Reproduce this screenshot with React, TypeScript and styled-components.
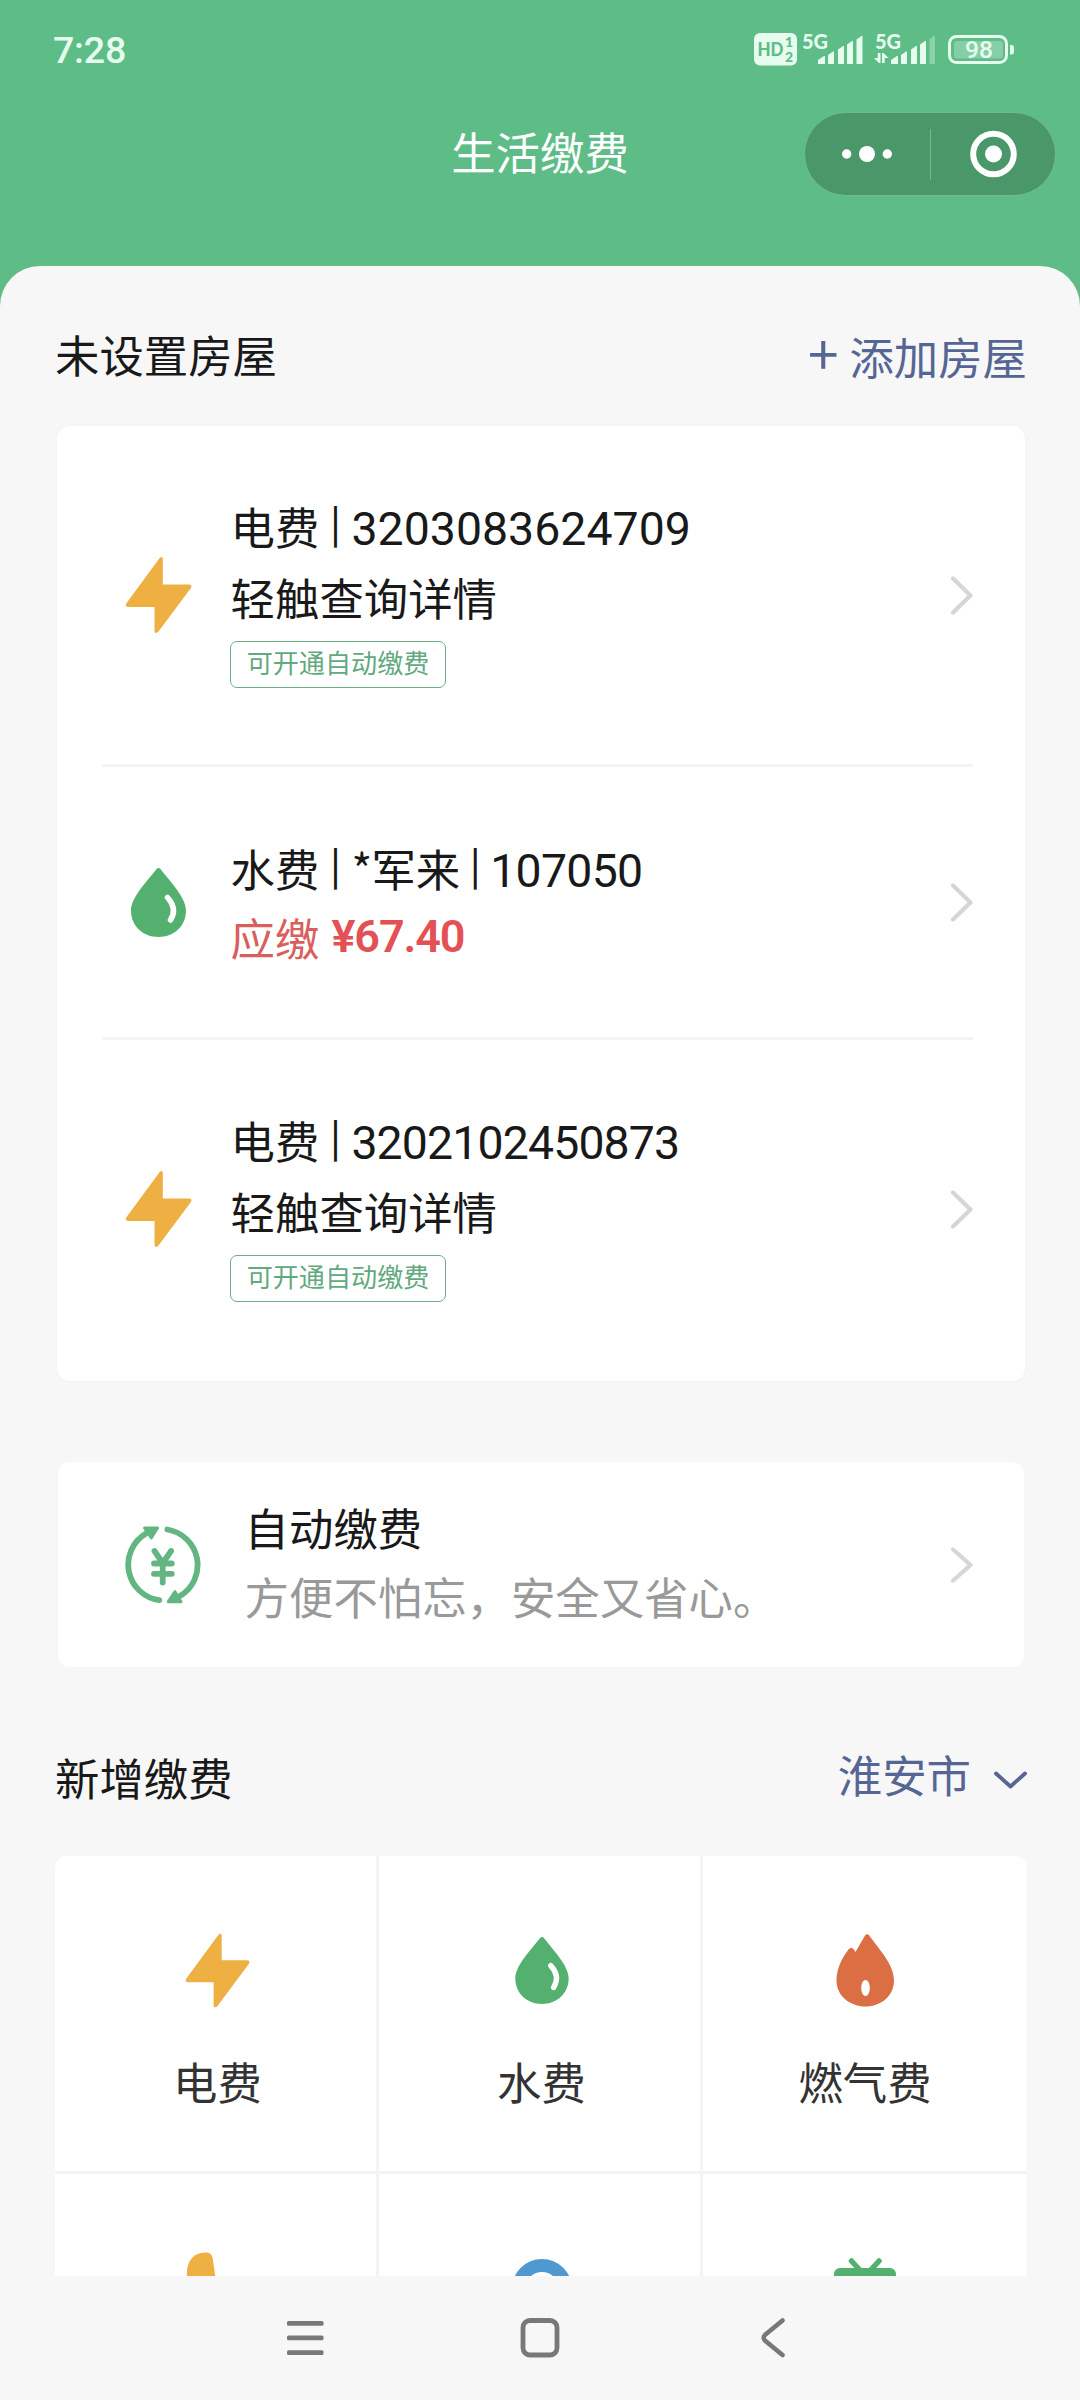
import React from "react";
import styled, { createGlobalStyle } from "styled-components";

const Global = createGlobalStyle`
  html, body { margin: 0; padding: 0; }
  body {
    background: #f7f7f7;
    font-family: "Noto Sans CJK SC", "Noto Sans", sans-serif;
    font-size: 44.4px;
    line-height: 64px;
    color: #191919;
  }
  *, *::before, *::after { box-sizing: border-box; }
  svg { display: block; flex: none; }
`;

const latin = `Roboto, "Noto Sans CJK SC", sans-serif`;

const Screen = styled.div`
  width: 1080px;
  height: 2400px;
  display: flex;
  flex-direction: column;
  overflow: hidden;
  background: #5ebc87;
`;

const StatusBar = styled.header`
  height: 98px;
  flex: none;
  display: flex;
  align-items: center;
  justify-content: space-between;
  padding: 0 65px 0 53px;
  color: #e6fcee;
`;

const Clock = styled.span`
  font-family: ${latin};
  font-size: 37.5px;
  font-weight: 500;
  line-height: 40px;
  letter-spacing: -0.2px;
  padding-top: 2px;
`;

const TitleBar = styled.div`
  height: 168px;
  flex: none;
  display: grid;
  grid-template-columns: 276px 1fr 276px;
  padding: 14px 24px 0;
  align-items: start;
`;

const PageTitle = styled.h1`
  grid-column: 2;
  margin: 0;
  padding-top: 7px;
  font-size: 44.4px;
  font-weight: 400;
  line-height: 64px;
  text-align: center;
  color: #fff;
`;

const Capsule = styled.div`
  justify-self: end;
  width: 252px;
  height: 84px;
  border-radius: 42px;
  border: 1px solid #6fb98c;
  background: #4a976a;
  display: flex;
  align-items: center;
`;

const CapsuleButton = styled.div`
  flex: 1;
  display: flex;
  align-items: center;
  justify-content: center;
`;

const CapsuleRule = styled.div`
  width: 1px;
  height: 51px;
  background: #7ab692;
`;

const Sheet = styled.main`
  flex: none;
  height: 2010px;
  overflow: hidden;
  border-radius: 40px 40px 0 0;
  background: #f7f7f7;
  padding: 0 53px 0 55px;
  display: flex;
  flex-direction: column;
`;

const SectionHead = styled.div<{ $top: number; $height: number }>`
  flex: none;
  height: ${(p) => p.$height}px;
  padding: ${(p) => p.$top}px 0 0;
  display: flex;
  align-items: flex-start;
  justify-content: space-between;
`;

const SectionTitle = styled.h2`
  margin: 0;
  font-size: 44.4px;
  font-weight: 400;
  line-height: 64px;
`;

const LinkText = styled.div<{ $shift: number; $gap: number }>`
  display: flex;
  align-items: center;
  gap: ${(p) => p.$gap}px;
  margin-top: ${(p) => p.$shift}px;
  color: #566694;
`;

const Plus = styled.span`
  font-size: 55px;
  line-height: 50px;
  margin-top: -10px;
`;

const BillCard = styled.section`
  flex: none;
  margin: 0 2px;
  height: 955px;
  border-radius: 13px;
  background: #fff;
  box-shadow: 0 0 0 2px #f5f5f5;
  padding: 0 52px 0 45px;
`;

const BillRow = styled.div<{ $height: number }>`
  height: ${(p) => p.$height}px;
  display: flex;
  align-items: center;
  & + & { border-top: 3px solid #f4f4f5; }
`;

const IconSlot = styled.div`
  width: 113px;
  flex: none;
  display: flex;
  justify-content: center;
`;

const BillText = styled.div<{ $drop: number; $lift: number }>`
  flex: 1;
  padding: ${(p) => p.$drop}px 0 ${(p) => p.$lift}px 15px;
  display: flex;
  flex-direction: column;
  align-items: flex-start;
`;

const Line = styled.div<{ $height: number; $color?: string }>`
  height: ${(p) => p.$height}px;
  padding-left: 0.6px;
  line-height: 64px;
  white-space: nowrap;
  color: ${(p) => p.$color ?? "#191919"};
`;

const Bar = styled.span<{ $width?: number }>`
  display: inline-block;
  width: ${(p) => p.$width ?? 32}px;
  text-align: center;
  font-size: 37px;
  font-weight: 500;
  line-height: 0;
  vertical-align: 8px;
`;

const Digits = styled.span<{ $track: number }>`
  font-family: ${latin};
  font-size: 46.4px;
  line-height: 0;
  letter-spacing: ${(p) => p.$track}px;
`;

const Star = styled.span`
  display: inline-block;
  width: 20px;
  text-align: center;
  line-height: 0;
`;

const Amount = styled.span`
  font-family: ${latin};
  font-size: 45px;
  font-weight: 600;
  line-height: 0;
  letter-spacing: -1.1px;
  margin-left: 12px;
  vertical-align: 4px;
  color: #e35155;
`;

const Tag = styled.div`
  width: 216px;
  height: 47px;
  border: 1.5px solid #6cae88;
  border-radius: 7px;
  display: flex;
  align-items: center;
  justify-content: center;
  padding-bottom: 5px;
  font-size: 26.1px;
  line-height: 38px;
  color: #62a97f;
`;

const AutoCard = styled.section`
  flex: none;
  margin: 81px 3px 0;
  height: 205px;
  border-radius: 12px;
  background: #fff;
  padding: 0 51px 0 66px;
  display: flex;
  align-items: center;
`;

const AutoText = styled.div`
  flex: 1;
  padding: 0 0 6px 42px;
`;

const TileGrid = styled.section`
  flex: none;
  display: grid;
  grid-template-columns: 321px 321px 324px;
  grid-template-rows: 315px 315px;
  gap: 3px;
  background: #f3f3f7;
  border-radius: 12px;
  overflow: hidden;
`;

const Tile = styled.div`
  background: #fff;
  display: flex;
  flex-direction: column;
  align-items: center;
  padding: 76px 0 0 4px;
  color: #333;
  &:nth-child(3n) { padding-left: 0; }
`;

const TileIcon = styled.div`
  height: 77px;
  display: flex;
  align-items: center;
`;

const TileLabel = styled.div`
  margin-top: 40px;
`;

const NavBar = styled.nav`
  flex: 1;
  display: flex;
  justify-content: space-between;
  padding: 40px 286px 0;
  background: #f7f7f7;
`;

const StatusIcons = () => (
  <svg width="262" height="60" viewBox="753 19 262 60" fill="#e6fcee" fontFamily="Lato, sans-serif" fontWeight="900">
    <rect x="754" y="33" width="43" height="32.5" rx="6" />
    <text x="757.500" y="56" fontSize="19" fill="#5ebc87" textLength="26" lengthAdjust="spacingAndGlyphs">HD</text>
    <text x="785" y="47" fontSize="14" fill="#5ebc87">1</text>
    <text x="785" y="62" fontSize="14" fill="#5ebc87">2</text>
    <text x="802" y="48.5" fontSize="21" textLength="26" lengthAdjust="spacingAndGlyphs">5G</text>
    <path d="M818 64v-4l6-4h1v8zM828 64V55l5-3.500h1V64zM838 64V49.500l5-3.500h1V64zM847 64V44.500l5-3.500h1V64zM856.500 64V39.500l5-3.500h1V64z" />
    <text x="875" y="48.500" fontSize="21" textLength="26" lengthAdjust="spacingAndGlyphs">5G</text>
    <path d="M877.800 53h2.700v10h-1.500l-5-5h3.800zM882 53h1.500l5 5h-3.800v5H882z" />
    <path d="M891 64v-4l6-4h1v8zM901 64V55l5-3.500h1V64zM911 64V49.500l5-3.500h1V64zM920 64V44.500l5-3.500h1V64z" />
    <path d="M929.500 64V39.500l4-3.500h1.500V64z" opacity="0.35" />
    <rect x="949.500" y="36.500" width="57" height="26" rx="7" fill="none" stroke="#e6fcee" strokeWidth="3" />
    <rect x="954" y="41" width="49" height="17.500" rx="3" opacity="0.3" />
    <path d="M1010 45h1.500q2.500 0 2.500 3v3.500q0 3-2.500 3h-1.500z" />
    <text x="965" y="58" fontSize="23.500" fontWeight="500" fontFamily="Roboto, sans-serif" textLength="28" lengthAdjust="spacingAndGlyphs">98</text>
  </svg>
);

const Bolt = ({ w = 67, h = 78 }: { w?: number; h?: number }) => (
  <svg width={w} height={h} viewBox="0 0 67 78" fill="#eeb042">
    <path d="M34.500 2.200C35.600 .4 37.800 .9 37.800 3v25.500H64c2.300 0 3 1.500 2.100 3.300L33.500 75.600c-1.300 1.900-4 1.700-4-.6V51H3C.8 51 .2 49.400 1.200 47.600z" />
  </svg>
);

const Drop = ({ w = 55, h = 69 }: { w?: number; h?: number }) => (
  <svg width={w} height={h} viewBox="0 0 55 69">
    <path d="M25.300 1.300c1.200-1.600 3.200-1.600 4.400 0C38 12.500 55 29 55 42.500 55 58 43 69 27.500 69S0 58 0 42.500C0 29 17 12.500 25.300 1.300z" fill="#54b06f" />
    <path d="M36.500 29.500c6.500 7 8 14.500 3 22.500" fill="none" stroke="#fff" strokeWidth="5.500" strokeLinecap="round" />
  </svg>
);

const Flame = () => (
  <svg width="58" height="73" viewBox="0 0 58 73">
    <path d="M29 1.500c1-1.700 3-1.700 4.300 0C42 14 58 30 58 46.500 58 62 45 72.500 29.500 72.500S.5 62 .5 46.500C.5 33 7.500 22 12.500 15.500c1.600-2.200 4.200-2 5.500.2L19.500 18z" fill="#dc6e44" />
    <ellipse cx="29.500" cy="54" rx="4.300" ry="8" fill="#fff" />
  </svg>
);

const Next = ({ h = 39 }: { h?: number }) => (
  <svg width="23" height={h} viewBox="0 0 23 39" preserveAspectRatio="none" fill="none" stroke="#d6d6d6" strokeWidth="4.200" strokeLinecap="round" strokeLinejoin="round">
    <path d="M3 2.500l17.500 17L3 36.500" />
  </svg>
);

const AutoPay = () => (
  <svg width="78" height="78" viewBox="0 0 78 78" fill="none" stroke="#63b681" strokeWidth="5.800" strokeLinecap="round" strokeLinejoin="round">
    <path d="M43.300 3.500A36 36 0 0 1 56 70" />
    <path d="M35.300 74.200A36 36 0 0 1 22 7.500" />
    <path d="M20.500 2H33.500L27.300 12zM44.300 75.700H57L51 65.700z" fill="#63b681" strokeWidth="3" />
    <path d="M30.500 25l8.200 12 8.400-12M38.700 37v19.500M30 37.500h17.800M30 47.800h17.800" />
  </svg>
);

type Bill = { kind: "power" | "water"; name: string; owner?: string; account: string; due?: string; height: number; track: number };

const bills: Bill[] = [
  { kind: "power", name: "电费", account: "3203083624709", height: 338, track: 0.05 },
  { kind: "water", name: "水费", owner: "军来", account: "107050", due: "¥67.40", height: 273, track: -0.7 },
  { kind: "power", name: "电费", account: "3202102450873", height: 341, track: -0.85 },
];

export default function App() {
  return (
    <Screen>
      <Global />
      <StatusBar>
        <Clock>7:28</Clock>
        <StatusIcons />
      </StatusBar>
      <TitleBar>
        <PageTitle>生活缴费</PageTitle>
        <Capsule>
          <CapsuleButton>
            <svg width="50" height="18" viewBox="0 0 50 18" fill="#fff">
              <circle cx="4.700" cy="9" r="4.700" />
              <circle cx="25" cy="9" r="8" />
              <circle cx="45.300" cy="9" r="4.700" />
            </svg>
          </CapsuleButton>
          <CapsuleRule />
          <CapsuleButton>
            <svg width="48" height="48" viewBox="0 0 48 48">
              <circle cx="24.500" cy="24" r="20.300" fill="none" stroke="#fff" strokeWidth="6" />
              <circle cx="24.500" cy="24" r="8.500" fill="#fff" />
            </svg>
          </CapsuleButton>
        </Capsule>
      </TitleBar>
      <Sheet>
        <SectionHead $top={56} $height={160}>
          <SectionTitle>未设置房屋</SectionTitle>
          <LinkText $shift={2} $gap={11}>
            <Plus>+</Plus>
            <span>添加房屋</span>
          </LinkText>
        </SectionHead>
        <BillCard>
          {bills.map((b) => (
            <BillRow key={b.account} $height={b.height}>
              <IconSlot>{b.kind === "power" ? <Bolt /> : <Drop />}</IconSlot>
              <BillText $drop={b.due ? 8 : 0} $lift={b.due ? 0 : 9}>
                <Line $height={b.due ? 69 : 71}>
                  {b.name}
                  <Bar>|</Bar>
                  {b.owner && (
                    <>
                      <Star>*</Star>
                      {b.owner}
                      <Bar $width={30}>|</Bar>
                    </>
                  )}
                  <Digits $track={b.track}>{b.account}</Digits>
                </Line>
                {b.due ? (
                  <Line $height={71} $color="#d95f5f">
                    应缴<Amount>{b.due}</Amount>
                  </Line>
                ) : (
                  <>
                    <Line $height={76}>轻触查询详情</Line>
                    <Tag>可开通自动缴费</Tag>
                  </>
                )}
              </BillText>
              <Next />
            </BillRow>
          ))}
        </BillCard>
        <AutoCard>
          <AutoPay />
          <AutoText>
            <Line $height={69}>自动缴费</Line>
            <Line $height={64} $color="#999">方便不怕忘，安全又省心。</Line>
          </AutoText>
          <Next h={36} />
        </AutoCard>
        <SectionHead $top={78} $height={189}>
          <SectionTitle>新增缴费</SectionTitle>
          <LinkText $shift={-3} $gap={23}>
            <span>淮安市</span>
            <svg width="33" height="32" viewBox="0 -4 33 32" fill="none" stroke="#566694" strokeWidth="3.800" strokeLinecap="round" strokeLinejoin="round">
              <path d="M2 11.500l14.500 13L31 11.500" />
            </svg>
          </LinkText>
        </SectionHead>
        <TileGrid>
          <Tile>
            <TileIcon><Bolt w={65} h={77} /></TileIcon>
            <TileLabel>电费</TileLabel>
          </Tile>
          <Tile>
            <TileIcon><Drop w={54} h={67} /></TileIcon>
            <TileLabel>水费</TileLabel>
          </Tile>
          <Tile>
            <TileIcon><Flame /></TileIcon>
            <TileLabel>燃气费</TileLabel>
          </Tile>
          <Tile>
            <svg width="64" height="64" viewBox="0 0 64 64" fill="#eeb042">
              <path d="M1.500 31C-1.500 14 6 2.500 19 2.500c5 0 7 1.500 7.800 6.500l3.200 22c8 10 22 8 32 14v14H19C8 56 4 45 1.500 31z" />
            </svg>
          </Tile>
          <Tile>
            <svg width="62" height="80" viewBox="0 0 62 80" fill="none" stroke="#4f98d0" strokeWidth="13">
              <circle cx="31" cy="39" r="23.500" />
            </svg>
          </Tile>
          <Tile>
            <svg width="62" height="72" viewBox="0 0 62 72">
              <path d="M17.500 11l11 12M45 11L34 23" stroke="#54b06f" strokeWidth="5.500" strokeLinecap="round" />
              <rect x="0" y="18" width="62" height="48" rx="6" fill="#54b06f" />
            </svg>
          </Tile>
        </TileGrid>
      </Sheet>
      <NavBar>
        <svg width="38" height="44" viewBox="0 0 38 44" fill="#787878">
          <rect x="1" y="5" width="36.500" height="4.800" rx="1.500" />
          <rect x="1" y="19.500" width="36.500" height="4.800" rx="1.500" />
          <rect x="1" y="34.200" width="36.500" height="4.800" rx="1.500" />
        </svg>
        <svg width="42" height="44" viewBox="0 0 42 44" fill="none" stroke="#787878" strokeWidth="4.800">
          <rect x="4" y="4.500" width="34" height="34.500" rx="7" />
        </svg>
        <svg width="38" height="44" viewBox="0 0 38 44" fill="none" stroke="#787878" strokeWidth="4.600" strokeLinecap="round">
          <path d="M26.500 4.500L9.500 18.500q-3.800 3.300 0 6.600L26.500 39" />
        </svg>
      </NavBar>
    </Screen>
  );
}
